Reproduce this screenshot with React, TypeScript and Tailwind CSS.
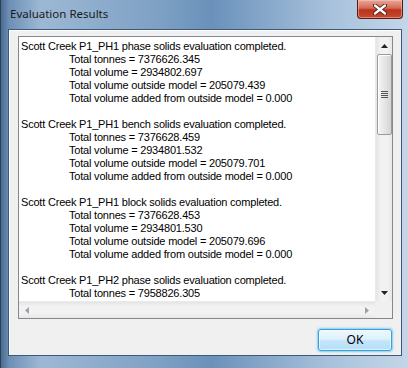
const lines: { text: string; indent?: boolean }[] = [
  { text: 'Scott Creek P1_PH1 phase solids evaluation completed.' },
  { text: 'Total tonnes = 7376626.345', indent: true },
  { text: 'Total volume = 2934802.697', indent: true },
  { text: 'Total volume outside model = 205079.439', indent: true },
  { text: 'Total volume added from outside model = 0.000', indent: true },
  { text: '' },
  { text: 'Scott Creek P1_PH1 bench solids evaluation completed.' },
  { text: 'Total tonnes = 7376628.459', indent: true },
  { text: 'Total volume = 2934801.532', indent: true },
  { text: 'Total volume outside model = 205079.701', indent: true },
  { text: 'Total volume added from outside model = 0.000', indent: true },
  { text: '' },
  { text: 'Scott Creek P1_PH1 block solids evaluation completed.' },
  { text: 'Total tonnes = 7376628.453', indent: true },
  { text: 'Total volume = 2934801.530', indent: true },
  { text: 'Total volume outside model = 205079.696', indent: true },
  { text: 'Total volume added from outside model = 0.000', indent: true },
  { text: '' },
  { text: 'Scott Creek P1_PH2 phase solids evaluation completed.' },
  { text: 'Total tonnes = 7958826.305', indent: true },
];

function Arrow({ dir, color = '#222' }: { dir: 'up' | 'down' | 'left' | 'right'; color?: string }) {
  const pts = {
    up: '0,4 7,4 3.5,0',
    down: '0,0 7,0 3.5,4',
    left: '4,0 4,7 0,3.5',
    right: '0,0 0,7 4,3.5',
  }[dir];
  const vert = dir === 'up' || dir === 'down';
  return (
    <svg width={vert ? 7 : 4} height={vert ? 4 : 7} viewBox={vert ? '0 0 7 4' : '0 0 4 7'}>
      <polygon points={pts} fill={color} />
    </svg>
  );
}

export default function App() {
  return (
    <div
      className="w-[408px] h-[368px] flex flex-col bg-[linear-gradient(90deg,#4a6b90_0px,#6d8fb5_8px,#9db8d4_40px,#7da0c4_160px,#6a91ba_210px,#a8c2dc_330px,#c4d6e8_408px)] border-l border-[#2b3e55]"
      style={{ fontFamily: '"Liberation Sans", Arial, sans-serif' }}
    >
      {/* title bar */}
      <div className="h-[29px] flex items-start justify-between shrink-0">
        <div
          className="pl-[9px] pt-[5px] text-[11.5px] text-[#1a1a1a]"
          style={{ fontFamily: '"Segoe UI", "Noto Sans", sans-serif' }}
        >
          Evaluation Results
        </div>
        <div className="mr-[5px] w-[46px] h-[19px] rounded-b-[4px] border border-t-0 border-[#5a1a14] bg-[linear-gradient(180deg,#e8a89a_0%,#d46a55_45%,#b8321c_55%,#c94a2e_100%)] flex items-center justify-center shadow-[inset_0_0_0_1px_rgba(255,200,190,0.5)]">
          <svg width="14" height="11" viewBox="0 0 14 11">
            <path d="M2 1.5 L12 9.5 M12 1.5 L2 9.5" stroke="#3a1410" strokeWidth="4" strokeLinecap="round" />
            <path d="M2 1.5 L12 9.5 M12 1.5 L2 9.5" stroke="#fff" strokeWidth="2.4" strokeLinecap="round" />
          </svg>
        </div>
      </div>

      {/* client area */}
      <div className="ml-[7px] mr-[6px] h-[327px] bg-[#f0f0f0] border border-[#3e5876] shadow-[inset_1px_1px_0_#fff] flex flex-col">
        <div className="mt-[6px] ml-[9px] mr-[8px] h-[283px] border border-[#828790] bg-white flex flex-col">
          <div className="flex flex-1 min-h-0">
            <div className="flex-1 min-w-0 overflow-hidden pt-[3px] pl-[2px] text-[11px] leading-[13px] tracking-[-0.2px] text-black whitespace-nowrap">
              {lines.map((l, i) => (
                <div key={i} className={`h-[13px] ${l.indent ? 'pl-[48px]' : ''}`}>
                  {l.text}
                </div>
              ))}
            </div>
            {/* vertical scrollbar */}
            <div className="w-[17px] bg-[linear-gradient(90deg,#e5e5e5,#f2f2f2_30%,#f2f2f2_70%,#e8e8e8)] border-l border-[#eaeaea] flex flex-col items-center">
              <div className="h-[17px] w-full flex items-center justify-center">
                <Arrow dir="up" />
              </div>
              <div className="w-[15px] h-[81px] rounded-[2px] border border-[#9a9a9a] bg-[linear-gradient(90deg,#f4f4f4,#e6e6e6_50%,#d4d4d4)] shadow-[inset_1px_1px_0_#fff] flex flex-col items-center justify-center gap-[1px]">
                <div className="w-[7px] h-[1px] bg-[#555]" />
                <div className="w-[7px] h-[1px] bg-[#555]" />
                <div className="w-[7px] h-[1px] bg-[#555]" />
                <div className="w-[7px] h-[1px] bg-[#555]" />
              </div>
              <div className="flex-1" />
              <div className="h-[17px] w-full flex items-center justify-center">
                <Arrow dir="down" />
              </div>
            </div>
          </div>
          {/* horizontal scrollbar */}
          <div className="h-[17px] flex shrink-0">
            <div className="flex-1 bg-[linear-gradient(180deg,#e5e5e5,#f2f2f2_30%,#f2f2f2_70%,#e8e8e8)] border-t border-[#eaeaea] flex items-center justify-between px-[6px]">
              <Arrow dir="left" color="#a0a0a0" />
              <Arrow dir="right" color="#a0a0a0" />
            </div>
            <div className="w-[17px] bg-[#f0f0f0]" />
          </div>
        </div>

        <div className="flex justify-end mt-[10px] mr-[9px]">
          <button
            className="w-[74px] h-[22px] rounded-[3px] border border-[#3c9fd8] bg-[linear-gradient(180deg,#eef8fe_0%,#dff1fc_45%,#c3e5fa_55%,#b5def8_100%)] shadow-[0_0_2px_1px_#7fd0f5,inset_0_0_0_1px_#ffffff99] text-[12px] text-black"
            style={{ fontFamily: '"Segoe UI", "Noto Sans", sans-serif' }}
          >
            OK
          </button>
        </div>
      </div>
    </div>
  );
}
